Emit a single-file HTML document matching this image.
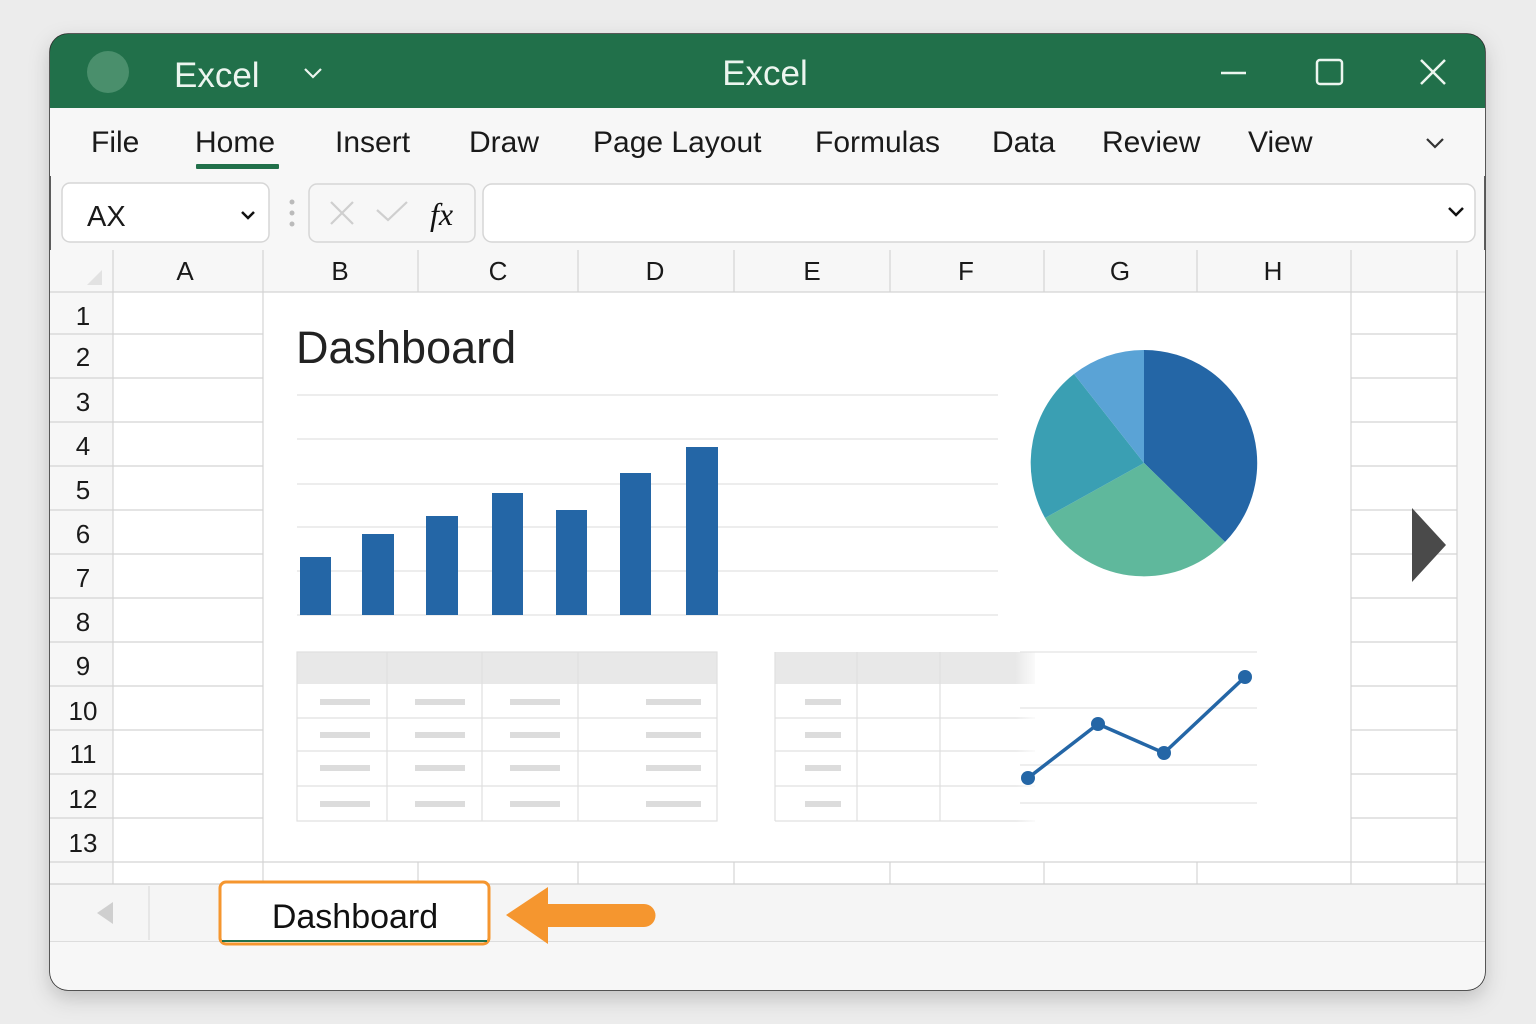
<!DOCTYPE html>
<html><head><meta charset="utf-8"><style>
html,body{margin:0;padding:0;background:#ececec;width:1536px;height:1024px;overflow:hidden}
svg{display:block}
text{font-family:"Liberation Sans",sans-serif}
</style></head><body>
<svg width="1536" height="1024" viewBox="0 0 1536 1024" xmlns="http://www.w3.org/2000/svg">
<defs>
<clipPath id="win"><rect x="50" y="34" width="1435" height="956" rx="18"/></clipPath>
<filter id="sh" x="-5%" y="-5%" width="110%" height="115%"><feDropShadow dx="0" dy="8" stdDeviation="10" flood-color="#000" flood-opacity="0.18"/></filter>
<linearGradient id="fade" x1="0" x2="1"><stop offset="0" stop-color="#fff" stop-opacity="0"/><stop offset="0.75" stop-color="#fff" stop-opacity="0"/><stop offset="1" stop-color="#fff" stop-opacity="1"/></linearGradient>
</defs>
<rect x="50" y="34" width="1435" height="956" rx="18" fill="#f7f7f7" stroke="#2a2a2a" stroke-width="1.5" filter="url(#sh)"/>
<g clip-path="url(#win)">
<rect x="50" y="34" width="1435" height="74" fill="#21704a"/>
<circle cx="108" cy="72" r="21" fill="#4a8f6c"/>
<text x="174" y="87" font-size="35" fill="#ecf5ef">Excel</text>
<path d="M305 69 l8 8 l8 -8" fill="none" stroke="#ecf5ef" stroke-width="2.2"/>
<text x="765" y="85" font-size="35" fill="#ecf5ef" text-anchor="middle">Excel</text>
<line x1="1221" y1="73" x2="1246" y2="73" stroke="#ecf5ef" stroke-width="2.5"/>
<rect x="1317" y="60" width="25" height="24" rx="3" fill="none" stroke="#ecf5ef" stroke-width="2.5"/>
<path d="M1421 60 l24 24 M1445 60 l-24 24" stroke="#ecf5ef" stroke-width="2.5"/>
<rect x="50" y="108" width="1435" height="68" fill="#f7f7f7"/>
<g font-size="30" fill="#1a1a1a">
<text x="91" y="152">File</text><text x="195" y="152">Home</text><text x="335" y="152">Insert</text>
<text x="469" y="152">Draw</text><text x="593" y="152">Page Layout</text><text x="815" y="152">Formulas</text>
<text x="992" y="152">Data</text><text x="1102" y="152">Review</text><text x="1248" y="152">View</text></g>
<rect x="196" y="164" width="83" height="5" rx="1" fill="#21704a"/>
<path d="M1427 139 l8 8 l8 -8" fill="none" stroke="#333" stroke-width="2.2"/>
<rect x="62" y="183" width="207" height="59" rx="8" fill="#fff" stroke="#d6d6d6" stroke-width="1.5"/>
<text x="87" y="226" font-size="29" fill="#1a1a1a">AX</text>
<path d="M242 212 l6 6 l6 -6" fill="none" stroke="#111" stroke-width="2.5"/>
<circle cx="292" cy="202" r="2.5" fill="#bbb"/><circle cx="292" cy="213" r="2.5" fill="#bbb"/><circle cx="292" cy="224" r="2.5" fill="#bbb"/>
<rect x="309" y="184" width="166" height="58" rx="8" fill="#f7f7f7" stroke="#d6d6d6" stroke-width="1.5"/>
<path d="M331 202 l22 22 M353 202 l-22 22" stroke="#cfcfcf" stroke-width="2.2"/>
<path d="M377 210 l11 10 l19 -18" fill="none" stroke="#cfcfcf" stroke-width="2.2"/>
<text x="430" y="225" font-size="32" style="font-family:'Liberation Serif',serif;font-style:italic" fill="#111">fx</text>
<rect x="483" y="184" width="992" height="58" rx="9" fill="#fff" stroke="#d6d6d6" stroke-width="1.5"/>
<path d="M1449 208 l7 7 l7 -7" fill="none" stroke="#111" stroke-width="2.5"/>
<rect x="50" y="250" width="1435" height="634" fill="#fff"/>
<rect x="50" y="250" width="1435" height="42" fill="#f7f7f7"/>
<rect x="50" y="250" width="63" height="634" fill="#f7f7f7"/>
<rect x="1457" y="250" width="28" height="634" fill="#f7f7f7"/>
<path d="M87 285 l15 -15 v15 z" fill="#e2e2e2"/>
<g stroke="#d4d4d4" stroke-width="1.2">
<line x1="50" y1="292" x2="1485" y2="292"/>
<line x1="113" y1="250" x2="113" y2="884"/><line x1="263" y1="250" x2="263" y2="884"/>
<line x1="418" y1="250" x2="418" y2="292"/><line x1="578" y1="250" x2="578" y2="292"/>
<line x1="734" y1="250" x2="734" y2="292"/><line x1="890" y1="250" x2="890" y2="292"/>
<line x1="1044" y1="250" x2="1044" y2="292"/><line x1="1197" y1="250" x2="1197" y2="292"/>
<line x1="1351" y1="250" x2="1351" y2="884"/><line x1="1457" y1="250" x2="1457" y2="884"/>
<line x1="418" y1="862" x2="418" y2="884"/><line x1="578" y1="862" x2="578" y2="884"/>
<line x1="734" y1="862" x2="734" y2="884"/><line x1="890" y1="862" x2="890" y2="884"/>
<line x1="1044" y1="862" x2="1044" y2="884"/><line x1="1197" y1="862" x2="1197" y2="884"/>
<line x1="50" y1="334" x2="263" y2="334"/><line x1="50" y1="378" x2="263" y2="378"/><line x1="50" y1="422" x2="263" y2="422"/>
<line x1="50" y1="466" x2="263" y2="466"/><line x1="50" y1="510" x2="263" y2="510"/><line x1="50" y1="554" x2="263" y2="554"/>
<line x1="50" y1="598" x2="263" y2="598"/><line x1="50" y1="642" x2="263" y2="642"/><line x1="50" y1="686" x2="263" y2="686"/>
<line x1="50" y1="730" x2="263" y2="730"/><line x1="50" y1="774" x2="263" y2="774"/><line x1="50" y1="818" x2="263" y2="818"/>
<line x1="50" y1="862" x2="1485" y2="862"/>
<line x1="1351" y1="334" x2="1457" y2="334"/><line x1="1351" y1="378" x2="1457" y2="378"/><line x1="1351" y1="422" x2="1457" y2="422"/>
<line x1="1351" y1="466" x2="1457" y2="466"/><line x1="1351" y1="510" x2="1457" y2="510"/><line x1="1351" y1="554" x2="1457" y2="554"/>
<line x1="1351" y1="598" x2="1457" y2="598"/><line x1="1351" y1="642" x2="1457" y2="642"/><line x1="1351" y1="686" x2="1457" y2="686"/>
<line x1="1351" y1="730" x2="1457" y2="730"/><line x1="1351" y1="774" x2="1457" y2="774"/><line x1="1351" y1="818" x2="1457" y2="818"/>
</g>
<g font-size="26" fill="#1a1a1a" text-anchor="middle">
<text x="185" y="280">A</text><text x="340" y="280">B</text><text x="498" y="280">C</text><text x="655" y="280">D</text>
<text x="812" y="280">E</text><text x="966" y="280">F</text><text x="1120" y="280">G</text><text x="1273" y="280">H</text>
<text x="83" y="325">1</text><text x="83" y="366">2</text><text x="83" y="411">3</text><text x="83" y="455">4</text>
<text x="83" y="499">5</text><text x="83" y="543">6</text><text x="83" y="587">7</text><text x="83" y="631">8</text>
<text x="83" y="675">9</text><text x="83" y="720">10</text><text x="83" y="763">11</text><text x="83" y="808">12</text><text x="83" y="852">13</text>
</g>
<text x="296" y="363" font-size="45" fill="#222">Dashboard</text>
<g stroke="#e2e2e2" stroke-width="1.2">
<line x1="297" y1="395" x2="998" y2="395"/><line x1="297" y1="439" x2="998" y2="439"/><line x1="297" y1="484" x2="998" y2="484"/>
<line x1="297" y1="527" x2="998" y2="527"/><line x1="297" y1="571" x2="998" y2="571"/><line x1="297" y1="615" x2="998" y2="615"/></g>
<g fill="#2466a6">
<rect x="300" y="557" width="31" height="58"/><rect x="362" y="534" width="32" height="81"/><rect x="426" y="516" width="32" height="99"/>
<rect x="492" y="493" width="31" height="122"/><rect x="556" y="510" width="31" height="105"/><rect x="620" y="473" width="31" height="142"/>
<rect x="686" y="447" width="32" height="168"/></g>
<path d="M1144 463 L1144 350 A113 113 0 0 1 1225 542 Z" fill="#2466a6"/>
<path d="M1144 463 L1225 542 A113 113 0 0 1 1045 518 Z" fill="#5fb89c"/>
<path d="M1144 463 L1045 518 A113 113 0 0 1 1074 374 Z" fill="#3a9fb3"/>
<path d="M1144 463 L1074 374 A113 113 0 0 1 1144 350 Z" fill="#5aa3d6"/>
<path d="M1412 508 L1446 545 L1412 582 Z" fill="#4a4a4a"/>
<rect x="297" y="652" width="420" height="32" fill="#e8e8e8"/>
<g stroke="#e0e0e0" stroke-width="1.2" fill="none">
<rect x="297" y="652" width="420" height="169"/>
<line x1="387" y1="652" x2="387" y2="821"/><line x1="482" y1="652" x2="482" y2="821"/><line x1="578" y1="652" x2="578" y2="821"/>
<line x1="297" y1="718" x2="717" y2="718"/><line x1="297" y1="751" x2="717" y2="751"/><line x1="297" y1="786" x2="717" y2="786"/></g>
<g fill="#dcdcdc">
<rect x="320" y="699" width="50" height="6"/><rect x="415" y="699" width="50" height="6"/><rect x="510" y="699" width="50" height="6"/><rect x="646" y="699" width="55" height="6"/>
<rect x="320" y="732" width="50" height="6"/><rect x="415" y="732" width="50" height="6"/><rect x="510" y="732" width="50" height="6"/><rect x="646" y="732" width="55" height="6"/>
<rect x="320" y="765" width="50" height="6"/><rect x="415" y="765" width="50" height="6"/><rect x="510" y="765" width="50" height="6"/><rect x="646" y="765" width="55" height="6"/>
<rect x="320" y="801" width="50" height="6"/><rect x="415" y="801" width="50" height="6"/><rect x="510" y="801" width="50" height="6"/><rect x="646" y="801" width="55" height="6"/></g>
<rect x="775" y="652" width="260" height="32" fill="#e8e8e8"/>
<g stroke="#e0e0e0" stroke-width="1.2" fill="none">
<line x1="775" y1="652" x2="775" y2="821"/><line x1="857" y1="652" x2="857" y2="821"/><line x1="940" y1="652" x2="940" y2="821"/>
<line x1="775" y1="821" x2="1035" y2="821"/><line x1="775" y1="718" x2="1035" y2="718"/><line x1="775" y1="751" x2="1035" y2="751"/><line x1="775" y1="786" x2="1035" y2="786"/></g>
<g fill="#dcdcdc"><rect x="805" y="699" width="36" height="6"/><rect x="805" y="732" width="36" height="6"/><rect x="805" y="765" width="36" height="6"/><rect x="805" y="801" width="36" height="6"/></g>
<rect x="940" y="640" width="100" height="190" fill="url(#fade)"/>
<g stroke="#e4e4e4" stroke-width="1.2"><line x1="1020" y1="652" x2="1257" y2="652"/><line x1="1020" y1="708" x2="1257" y2="708"/><line x1="1020" y1="765" x2="1257" y2="765"/><line x1="1020" y1="803" x2="1257" y2="803"/></g>
<polyline points="1028,778 1098,724 1164,753 1245,677" fill="none" stroke="#2466a6" stroke-width="3.5" stroke-linejoin="round"/>
<g fill="#2466a6"><circle cx="1028" cy="778" r="7"/><circle cx="1098" cy="724" r="7"/><circle cx="1164" cy="753" r="7"/><circle cx="1245" cy="677" r="7"/></g>
<rect x="50" y="884" width="1435" height="58" fill="#f5f5f5"/>
<line x1="50" y1="884" x2="1485" y2="884" stroke="#cfcfcf" stroke-width="1.2"/>
<line x1="50" y1="942" x2="1485" y2="942" stroke="#cfcfcf" stroke-width="1.2"/>
<line x1="149" y1="886" x2="149" y2="940" stroke="#dcdcdc" stroke-width="1.2"/>
<path d="M97 913 L113 902 V924 Z" fill="#cfcfcf"/>
<rect x="50" y="942" width="1435" height="48" fill="#f7f7f7"/>
<rect x="220" y="882" width="269" height="62" rx="6" fill="#fff" stroke="#f5962f" stroke-width="3"/>
<line x1="222" y1="941" x2="487" y2="941" stroke="#21704a" stroke-width="2"/>
<text x="355" y="928" font-size="34" fill="#111" text-anchor="middle">Dashboard</text>
<path d="M506 915 L548 887 L548 904 L644 904 A11.5 11.5 0 0 1 644 927 L548 927 L548 944 Z" fill="#f5962f"/>
</g>
</svg>
</body></html>
